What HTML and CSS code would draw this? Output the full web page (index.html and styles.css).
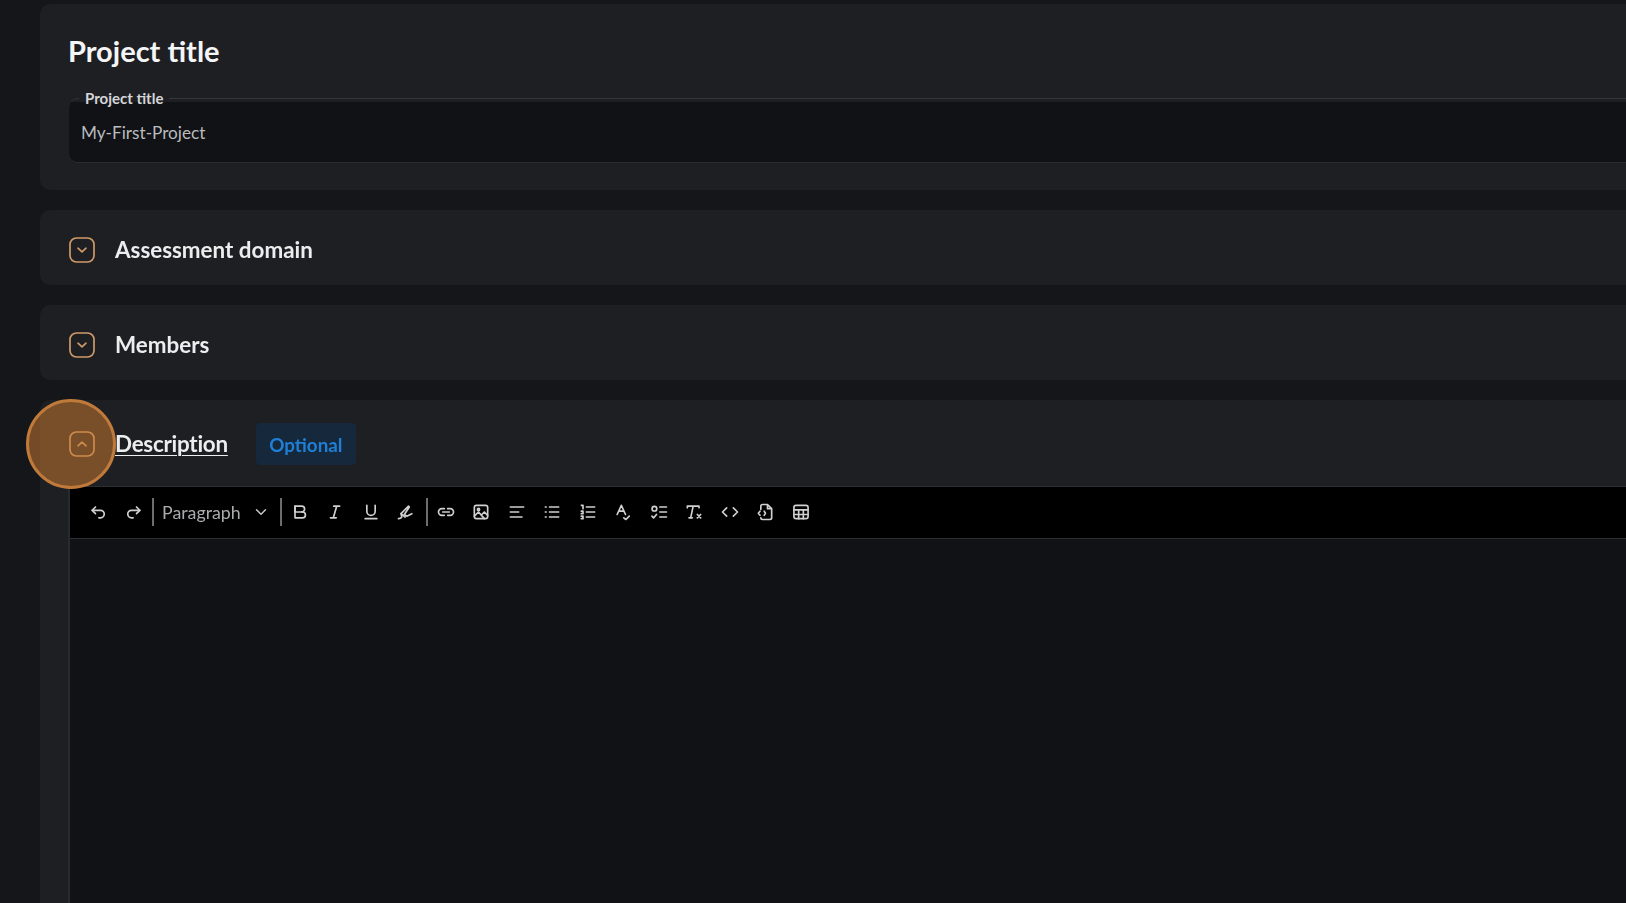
FILE: index.html
```html
<!DOCTYPE html>
<html lang="en">
<head>
<meta charset="utf-8">
<title>Project</title>
<link rel="stylesheet" href="styles.css">
</head>
<body>
<main class="page">
  <section class="card card-title">
    <h1 class="page-title">Project title</h1>
    <fieldset class="field">
      <legend class="field-label">Project title</legend>
      <div class="field-value">My-First-Project</div>
    </fieldset>
  </section>

  <section class="card card-row">
    <span class="toggle"><svg viewBox="0 0 26 26"><rect x="1" y="1" width="24" height="24" rx="6.5"/><path d="M9 11.2l4 3.600 4-3.600"/></svg></span>
    <h2 class="section-title">Assessment domain</h2>
  </section>

  <section class="card card-row">
    <span class="toggle"><svg viewBox="0 0 26 26"><rect x="1" y="1" width="24" height="24" rx="6.5"/><path d="M9 11.2l4 3.600 4-3.600"/></svg></span>
    <h2 class="section-title">Members</h2>
  </section>

  <section class="card card-editor">
    <div class="editor-head">
      <span class="toggle"><svg viewBox="0 0 26 26"><rect x="1" y="1" width="24" height="24" rx="6.5"/><path d="M9 14.800l4-3.600 4 3.600"/></svg></span>
      <h2 class="section-title is-link">Description</h2>
      <span class="badge">Optional</span>
    </div>
    <div class="editor">
      <div class="toolbar">
        <span class="tool"><svg viewBox="0 0 24 24"><path d="M9 14L5 10l4-4"/><path d="M5 10h10a4.500 4.500 0 0 1 0 9h-2"/></svg></span>
        <span class="tool"><svg viewBox="0 0 24 24"><path d="M15 14l4-4-4-4"/><path d="M19 10H9a4.500 4.500 0 0 0 0 9h2"/></svg></span>
        <span class="sep sep-a"></span>
        <span class="select">Paragraph<svg viewBox="0 0 24 24"><path d="M6 9l6 6 6-6"/></svg></span>
        <span class="sep sep-b"></span>
        <span class="tool"><svg viewBox="0 0 24 24"><path d="M6 5h8a3.500 3.500 0 0 1 0 7H6z"/><path d="M14 12h1a3.500 3.500 0 0 1 0 7H6V5"/></svg></span>
        <span class="tool"><svg viewBox="0 0 24 24"><path d="M10.500 5h7M6.500 19h7M14 5l-4 14"/></svg></span>
        <span class="tool"><svg viewBox="0 0 24 24"><path d="M7 4v7a5 5 0 0 0 10 0V4M5 20h14"/></svg></span>
        <span class="tool"><svg viewBox="0 0 24 24"><path d="M3 20c2 0 3-.5 4-2l-1-4 9-9 1 1-6 9 3 2 6-3"/><path d="M6 14l5 4"/></svg></span>
        <span class="sep sep-c"></span>
        <span class="tool"><svg viewBox="0 0 24 24"><path d="M10 8H7a4 4 0 0 0 0 8h3M14 8h3a4 4 0 0 1 0 8h-3M8 12h8"/></svg></span>
        <span class="tool"><svg viewBox="0 0 24 24"><rect x="4" y="4" width="16" height="16" rx="2.500"/><circle cx="9" cy="9" r="1.300"/><path d="M4 17l5-5 7 8M13 15l3-3 4 4"/></svg></span>
        <span class="tool"><svg viewBox="0 0 24 24"><path d="M4 6h16M4 12h10M4 18h14"/></svg></span>
        <span class="tool"><svg viewBox="0 0 24 24"><path d="M9 6h11M9 12h11M9 18h11M4 6h1M4 12h1M4 18h1"/></svg></span>
        <span class="tool"><svg viewBox="0 0 24 24"><path d="M10 6h10M10 12h10M10 18h10M4 4h2v4M4 11h2v3H4M4 17h2v3H4"/></svg></span>
        <span class="tool"><svg viewBox="0 0 24 24"><path d="M5 15l5-11 5 11M7 11h6M13 19l2.500 2 4-4"/></svg></span>
        <span class="tool"><svg viewBox="0 0 24 24"><circle cx="6.500" cy="8" r="2.800"/><path d="M3.500 17l2 2 3.500-4M13 6h8M13 12h8M13 18h8"/></svg></span>
        <span class="tool"><svg viewBox="0 0 24 24"><path d="M4 7V5h14v2M11 5L8 19M6 19h4M16 15l4 4M20 15l-4 4"/></svg></span>
        <span class="tool"><svg viewBox="0 0 24 24"><path d="M8 7l-5 5 5 5M16 7l5 5-5 5"/></svg></span>
        <span class="tool"><svg viewBox="0 0 24 24"><path d="M7 9V5a2 2 0 0 1 2-2h6l5 5v11a2 2 0 0 1-2 2H9a2 2 0 0 1-2-2M15 3v5h5"/><path d="M6 11l-2 2.500L6 16M11 11l1.500 2.500L11 16"/></svg></span>
        <span class="tool"><svg viewBox="0 0 24 24"><rect x="3.500" y="4" width="17" height="16" rx="2.500"/><path d="M3.500 9.500h17M3.500 15h17M9.200 9.500V20M14.800 9.500V20"/></svg></span>
      </div>
      <div class="editor-body"></div>
    </div>
  </section>
</main>
<div class="spotlight"></div>
</body>
</html>
```
FILE: styles.css
```css
* { box-sizing: border-box; }
html, body { margin: 0; height: 100%; overflow: hidden; }
body {
  background: #14161a;
  font-family: "Lato", "Open Sans", sans-serif;
  color: #f1f2f3;
}
.page {
  width: 1680px;
  height: 940px;
  padding: 4px 0 0 40px;
  display: flex;
  flex-direction: column;
  gap: 20px;
  filter: blur(0.4px);
}
.card {
  background: #1e1f23;
  border-radius: 10px 0 0 10px;
}
.card-title {
  height: 186px;
  padding: 28px 0 0 28px;
}
.page-title {
  margin: 0 0 20px;
  font-size: 29px;
  line-height: 38px;
  font-weight: 700;
  color: #f4f5f6;
}
.field {
  margin: 0 0 0 1px;
  padding: 0;
  height: 73px;
  border: 0;
  border-top: 1px solid #35373b;
  border-bottom: 1px solid #2a2c30;
  border-radius: 9px 0 0 9px;
  background: linear-gradient(#1e1f23 3px, #101215 3px);
}
.field-label {
  margin-left: 10px;
  padding: 0 6px;
  font-size: 15px;
  line-height: 17px;
  font-weight: 700;
  color: #d4d5d7;
}
.field-value {
  padding: 14px 0 0 12px;
  font-size: 17.200px;
  line-height: 24px;
  color: #b9bbbe;
}
.card-row {
  height: 75px;
  padding: 5px 0 0 29px;
  display: flex;
  align-items: center;
  gap: 20px;
}
.toggle {
  width: 26px;
  height: 26px;
  flex: none;
  display: block;
}
.toggle svg {
  display: block;
  width: 26px;
  height: 26px;
  fill: none;
  stroke: #cf9a68;
  stroke-width: 1.700;
  stroke-linecap: round;
  stroke-linejoin: round;
}
.section-title {
  margin: 0;
  font-size: 22.400px;
  line-height: 30px;
  font-weight: 700;
  color: #eceded;
}
.is-link {
  letter-spacing: -0.25px;
  text-decoration: underline;
  text-underline-offset: 3px;
  text-decoration-thickness: 1px;
}
.card-editor {
  flex: 1;
  padding-left: 29px;
  display: flex;
  flex-direction: column;
}
.editor-head {
  height: 86px;
  padding-top: 2px;
  flex: none;
  display: flex;
  align-items: center;
  gap: 20px;
}
.badge {
  margin-left: 8px;
  width: 100px;
  height: 42px;
  border-radius: 4px;
  background: #15283c;
  color: #1f7fd6;
  font-size: 18.800px;
  font-weight: 700;
  display: flex;
  align-items: center;
  justify-content: center;
}
.editor {
  flex: 1;
  display: flex;
  flex-direction: column;
  border-left: 2px solid #292a2f;
  background: #101215;
  margin-left: -1px;
}
.toolbar {
  height: 53px;
  flex: none;
  background: #000;
  border-top: 1px solid #2c2e32;
  border-bottom: 1px solid #2c2e32;
  padding: 0 0 2px 18px;
  display: flex;
  align-items: center;
  color: #cfd0d1;
}
.tool {
  width: 20px;
  height: 20px;
  flex: none;
  margin-right: 15.500px;
}
.tool svg, .select svg {
  display: block;
  width: 20px;
  height: 20px;
  fill: none;
  stroke: currentColor;
  stroke-width: 2;
  stroke-linecap: round;
  stroke-linejoin: round;
}
.sep {
  width: 2px;
  height: 28px;
  flex: none;
  background: #6c6d6f;
}
.sep-a { margin: 0 8px 0 -7px; }
.sep-b { margin: 0 8px 0 10px; }
.sep-c { margin: 0 8px 0 -6px; }
.select {
  display: flex;
  align-items: center;
  gap: 11px;
  font-size: 17.800px;
  line-height: 20px;
  color: #a9abad;
}
.select svg { width: 18px; height: 18px; color: #c6c7c8; }
.editor-body { flex: 1; }
.spotlight {
  position: absolute;
  left: 26px;
  top: 399px;
  width: 90px;
  height: 90px;
  border-radius: 50%;
  border: 3px solid #c07a3a;
  background: rgba(205, 125, 50, 0.52);
  pointer-events: none;
}
```
